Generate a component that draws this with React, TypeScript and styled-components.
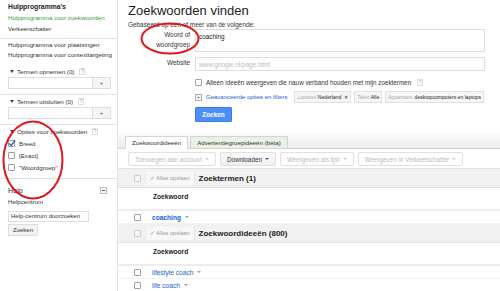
import React from "react";
import styled, { createGlobalStyle } from "styled-components";

const GlobalStyle = createGlobalStyle`
  html, body {
    margin: 0;
    padding: 0;
    background: #fff;
    font-family: "Liberation Sans", Arial, sans-serif;
    color: #222;
  }
  * { box-sizing: border-box; }
`;

// --- layout ---
const Page = styled.div`
  position: relative;
  display: flex;
  width: 500px;
  height: 291px;
  overflow: hidden;
`;

const Sidebar = styled.aside`
  width: 118px;
  flex-shrink: 0;
  border-right: 1px solid #e3e3e3;
  font-size: 6.2px;
`;

const Section = styled.div<{ $pt?: number; $pb?: number; $last?: boolean }>`
  padding: ${(p) => p.$pt ?? 0}px 6px ${(p) => p.$pb ?? 5}px 8px;
  border-bottom: ${(p) => (p.$last ? "none" : "1px solid #e3e3e3")};
`;

const SideTitle = styled.div`
  font-weight: bold;
  font-size: 6.8px;
  line-height: 11px;
`;

const SideLink = styled.div<{ $active?: boolean; $lh?: number }>`
  line-height: ${(p) => p.$lh ?? 11}px;
  color: ${(p) => (p.$active ? "#3d9a3d" : "#333")};
  white-space: nowrap;
`;

const Toggle = styled.div<{ $mt?: number }>`
  display: flex;
  align-items: center;
  gap: 3px;
  height: 12px;
  margin-top: ${(p) => p.$mt ?? 0}px;
  color: #333;
`;

const Caret = styled.span`
  width: 0;
  height: 0;
  margin-left: 2px;
  border-left: 2.5px solid transparent;
  border-right: 2.5px solid transparent;
  border-top: 3px solid #444;
`;

const HelpMark = styled.span`
  display: inline-flex;
  align-items: center;
  justify-content: center;
  width: 6px;
  height: 7px;
  border: 1px solid #ddd;
  color: #aaa;
  font-size: 5px;
  margin-left: 2px;
`;

const InputRow = styled.div`
  display: flex;
  height: 12px;
  width: 103px;
`;

const SideInput = styled.div`
  flex: 1;
  border: 1px solid #ddd;
  border-right: none;
  background: #fff;
`;

const PlusBtn = styled.div`
  width: 19px;
  border: 1px solid #ddd;
  background: #f4f4f4;
  display: flex;
  align-items: center;
  justify-content: center;
  font-size: 6px;
  color: #555;
`;

const CheckRow = styled.div`
  display: flex;
  align-items: center;
  gap: 4px;
  height: 12px;
  color: #333;
`;

const Box = styled.span<{ $muted?: boolean }>`
  position: relative;
  width: 7px;
  height: 7px;
  flex-shrink: 0;
  border: 1px solid ${(p) => (p.$muted ? "#ccc" : "#a0a0a0")};
  background: ${(p) => (p.$muted ? "#f5f5f5" : "#fff")};
  border-radius: 1px;
`;

const CheckSvg = styled.svg`
  position: absolute;
  left: -1px;
  top: -2px;
  width: 8px;
  height: 8px;
`;

const HelpHead = styled.div`
  display: flex;
  align-items: center;
  justify-content: space-between;
  height: 12px;
  font-size: 7.2px;
  color: #333;
  padding-right: 4px;
`;

const MinusBox = styled.span`
  width: 7px;
  height: 7px;
  border: 1px solid #bbb;
  display: flex;
  align-items: center;
  justify-content: center;
  &::after {
    content: "";
    width: 3px;
    height: 1px;
    background: #555;
  }
`;

const HelpSearch = styled.div`
  width: 81px;
  height: 11px;
  margin-top: 3px;
  border: 1px solid #ddd;
  padding-left: 2px;
  line-height: 9px;
  font-size: 6px;
  color: #333;
`;

const SmallBtn = styled.div`
  width: 30px;
  height: 12px;
  margin-top: 2px;
  border: 1px solid #ddd;
  background: #f3f3f3;
  font-size: 6px;
  line-height: 10px;
  text-align: center;
  color: #333;
`;

// --- main ---
const Main = styled.main`
  flex: 1;
  min-width: 0;
  font-size: 6.3px;
`;

const Header = styled.div`
  padding: 3px 0 0 10px;
`;

const Title = styled.h1`
  margin: 0;
  font-size: 13px;
  font-weight: normal;
  line-height: 15px;
  color: #222;
`;

const Sub = styled.div`
  margin-top: 2px;
  font-size: 6.4px;
  line-height: 9px;
  color: #333;
`;

const FormGrid = styled.div`
  display: grid;
  grid-template-columns: 62px 290px;
  column-gap: 5px;
  row-gap: 5px;
`;

const Label = styled.div`
  text-align: right;
  font-size: 6.4px;
  line-height: 10px;
  color: #333;
  padding-top: 1px;
`;

const Field = styled.div<{ $h: number }>`
  height: ${(p) => p.$h}px;
  border: 1px solid #ddd;
  padding: 2px 3px;
  font-size: 6.4px;
  line-height: 9px;
  color: #222;
`;

const Placeholder = styled.span`
  color: #bbb;
`;

const Options = styled.div`
  padding-left: 67px;
`;

const OptRow = styled.div<{ $mt: number }>`
  display: flex;
  align-items: center;
  gap: 4px;
  height: 12px;
  margin-top: ${(p) => p.$mt}px;
  white-space: nowrap;
  color: #333;
`;

const PlusSquare = styled.span`
  width: 7px;
  height: 7px;
  border: 1px solid #aaa;
  display: flex;
  align-items: center;
  justify-content: center;
  font-size: 6px;
  line-height: 6px;
  color: #666;
`;

const BlueLink = styled.span<{ $bold?: boolean; $size?: number }>`
  color: #1a5fcc;
  font-weight: ${(p) => (p.$bold ? "bold" : "normal")};
  ${(p) => (p.$size ? `font-size: ${p.$size}px;` : "")}
`;

const Chips = styled.div`
  display: flex;
  gap: 3px;
  margin-left: 3px;
`;

const Chip = styled.span`
  height: 12px;
  padding: 0 2px;
  border: 1px solid #e0e0e0;
  background: #f6f6f6;
  line-height: 10px;
  font-size: 5.1px;
  color: #222;
  white-space: nowrap;
`;

const ChipKey = styled.span`
  color: #aaa;
`;

const PrimaryBtn = styled.div`
  width: 37px;
  height: 15px;
  margin-top: 4px;
  background: #4d8ff8;
  border: 1px solid #3b7de8;
  border-radius: 1px;
  color: #fff;
  font-weight: bold;
  font-size: 6.4px;
  line-height: 13px;
  text-align: center;
`;

const TabBand = styled.div`
  margin-top: 6px;
  height: 21px;
  padding-left: 7px;
  display: flex;
  align-items: flex-end;
  gap: 2px;
  background: linear-gradient(#ffffff, #ececec);
  border-bottom: 1px solid #d4d4d4;
`;

const Tab = styled.div<{ $active?: boolean }>`
  height: 13px;
  padding: 0 6px;
  margin-bottom: -1px;
  border: 1px solid #d4d4d4;
  border-bottom-color: ${(p) => (p.$active ? "#fff" : "#d4d4d4")};
  background: ${(p) => (p.$active ? "#fff" : "#e9f1e6")};
  font-size: 6.2px;
  line-height: 11px;
  color: #333;
  white-space: nowrap;
`;

const Toolbar = styled.div`
  display: flex;
  gap: 4px;
  padding: 3px 10px 2px;
  border-bottom: 1px solid #e2e2e2;
`;

const ToolBtn = styled.div<{ $enabled?: boolean }>`
  display: flex;
  align-items: center;
  gap: 3px;
  height: 14px;
  padding: 0 6px;
  border: 1px solid #e0e0e0;
  border-radius: 2px;
  background: ${(p) => (p.$enabled ? "linear-gradient(#fafafa, #efefef)" : "#fff")};
  color: ${(p) => (p.$enabled ? "#333" : "#bbb")};
  font-size: 6.3px;
  white-space: nowrap;
`;

const SmallCaret = styled.span<{ $color?: string }>`
  width: 0;
  height: 0;
  border-left: 2px solid transparent;
  border-right: 2px solid transparent;
  border-top: 2.5px solid ${(p) => p.$color ?? "#999"};
`;

const GroupRow = styled.div`
  display: flex;
  align-items: center;
  height: 19px;
  padding-left: 16px;
  background: #f1f1f1;
  border-bottom: 1px solid #e0e0e0;
`;

const SaveBtn = styled.span`
  margin-left: 5px;
  height: 13px;
  padding: 0 4px;
  border-right: 1px solid #e4e4e4;
  background: #f7f7f7;
  line-height: 13px;
  font-size: 5.6px;
  color: #999;
  white-space: nowrap;
`;

const GroupTitle = styled.span`
  margin-left: 4px;
  font-weight: bold;
  font-size: 8px;
  color: #222;
`;

const HeadRow = styled.div`
  height: 23px;
  padding: 4px 0 0 35px;
  border-bottom: 2px solid #ececec;
  font-weight: bold;
  font-size: 6.6px;
  line-height: 10px;
  color: #222;
`;

const KwRow = styled.div`
  display: flex;
  align-items: center;
  height: 13px;
  padding-left: 16px;
  gap: 11px;
  font-size: 6.6px;
  border-bottom: 1px solid #f1f1f1;
`;

const KwLink = styled.span`
  display: flex;
  align-items: center;
  gap: 4px;
`;

const Ring = styled.svg`
  position: absolute;
  pointer-events: none;
`;

function Check({ checked, muted }: { checked?: boolean; muted?: boolean }) {
  return (
    <Box $muted={muted}>
      {checked && (
        <CheckSvg viewBox="0 0 10 10">
          <path d="M1.5 5.5 L4 8 L9 1.5" fill="none" stroke="#2a63d6" strokeWidth="1.8" />
        </CheckSvg>
      )}
    </Box>
  );
}

function Keyword({ text, bold }: { text: string; bold?: boolean }) {
  return (
    <KwRow>
      <Check />
      <KwLink>
        <BlueLink $bold={bold}>{text}</BlueLink>
        <SmallCaret $color="#7aa0e0" />
      </KwLink>
    </KwRow>
  );
}

function Group({ title }: { title: string }) {
  return (
    <GroupRow>
      <Check muted />
      <SaveBtn>✓ Alles opslaan</SaveBtn>
      <GroupTitle>{title}</GroupTitle>
    </GroupRow>
  );
}

export default function App() {
  return (
    <Page>
      <GlobalStyle />
      <Sidebar>
        <Section $pt={1} $pb={4}>
          <SideTitle>Hulpprogramma's</SideTitle>
          <SideLink $active>Hulpprogramma voor zoekwoorden</SideLink>
          <SideLink>Verkeerschatter</SideLink>
        </Section>
        <Section $pt={1} $pb={5}>
          <SideLink $lh={10}>Hulpprogramma voor plaatsingen</SideLink>
          <SideLink $lh={10}>Hulpprogramma voor contexttargeting</SideLink>
          <Toggle $mt={5}>
            <Caret />
            Termen opnemen (0)
            <HelpMark>?</HelpMark>
          </Toggle>
          <InputRow>
            <SideInput />
            <PlusBtn>+</PlusBtn>
          </InputRow>
        </Section>
        <Section $pb={5}>
          <Toggle>
            <Caret />
            Termen uitsluiten (0)
            <HelpMark>?</HelpMark>
          </Toggle>
          <InputRow>
            <SideInput />
            <PlusBtn>+</PlusBtn>
          </InputRow>
        </Section>
        <Section $pb={5}>
          <Toggle>
            <Caret />
            Opties voor zoekwoorden
            <HelpMark>?</HelpMark>
          </Toggle>
          <CheckRow>
            <Check checked />
            Breed
          </CheckRow>
          <CheckRow>
            <Check />
            [Exact]
          </CheckRow>
          <CheckRow>
            <Check />
            "Woordgroep"
          </CheckRow>
        </Section>
        <Section $pt={5} $last>
          <HelpHead>
            Help
            <MinusBox />
          </HelpHead>
          <SideLink $lh={12}>Helpcentrum</SideLink>
          <HelpSearch>Help-centrum doorzoeken</HelpSearch>
          <SmallBtn>Zoeken</SmallBtn>
        </Section>
      </Sidebar>

      <Main>
        <Header>
          <Title>Zoekwoorden vinden</Title>
          <Sub>Gebaseerd op een of meer van de volgende:</Sub>
          <FormGrid>
            <Label>
              Woord of
              <br />
              woordgroep
            </Label>
            <Field $h={23}>coaching</Field>
            <Label>Website</Label>
            <Field $h={14}>
              <Placeholder>www.google.nl/page.html</Placeholder>
            </Field>
          </FormGrid>
          <Options>
            <OptRow $mt={5}>
              <Check />
              Alleen ideeën weergeven die nauw verband houden met mijn zoektermen
              <HelpMark>?</HelpMark>
            </OptRow>
            <OptRow $mt={3}>
              <PlusSquare>+</PlusSquare>
              <BlueLink $size={6}>Geavanceerde opties en filters</BlueLink>
              <Chips>
                <Chip>
                  <ChipKey>Locaties:</ChipKey>Nederland&nbsp; ✕
                </Chip>
                <Chip>
                  <ChipKey>Talen:</ChipKey>Alle
                </Chip>
                <Chip>
                  <ChipKey>Apparaten: </ChipKey>desktopcomputers en laptops
                </Chip>
              </Chips>
            </OptRow>
            <PrimaryBtn>Zoeken</PrimaryBtn>
          </Options>
        </Header>

        <TabBand>
          <Tab $active>Zoekwoordideeën</Tab>
          <Tab>Advertentiegroepideeën (bèta)</Tab>
        </TabBand>

        <Toolbar>
          <ToolBtn>
            Toevoegen aan account <SmallCaret $color="#ccc" />
          </ToolBtn>
          <ToolBtn $enabled>
            Downloaden <SmallCaret $color="#555" />
          </ToolBtn>
          <ToolBtn>
            Weergeven als lijst <SmallCaret $color="#ccc" />
          </ToolBtn>
          <ToolBtn>
            Weergeven in Verkeerschatter <SmallCaret $color="#ccc" />
          </ToolBtn>
        </Toolbar>

        <Group title="Zoektermen (1)" />
        <HeadRow>Zoekwoord</HeadRow>
        <Keyword text="coaching" bold />
        <Group title="Zoekwoordideeën (800)" />
        <HeadRow>Zoekwoord</HeadRow>
        <Keyword text="lifestyle coach" />
        <Keyword text="life coach" />
      </Main>

      {/* hand-drawn annotation rings */}
      <Ring style={{ left: 2, top: 120, width: 62, height: 80 }} viewBox="0 0 62 80">
        <ellipse cx="31" cy="40" rx="29.5" ry="38.5" fill="none" stroke="#e0161c" strokeWidth="2" />
      </Ring>
      <Ring style={{ left: 140, top: 22, width: 60, height: 33 }} viewBox="0 0 60 33">
        <ellipse cx="30" cy="16.5" rx="28.5" ry="15" fill="none" stroke="#e0161c" strokeWidth="2" />
      </Ring>
    </Page>
  );
}
